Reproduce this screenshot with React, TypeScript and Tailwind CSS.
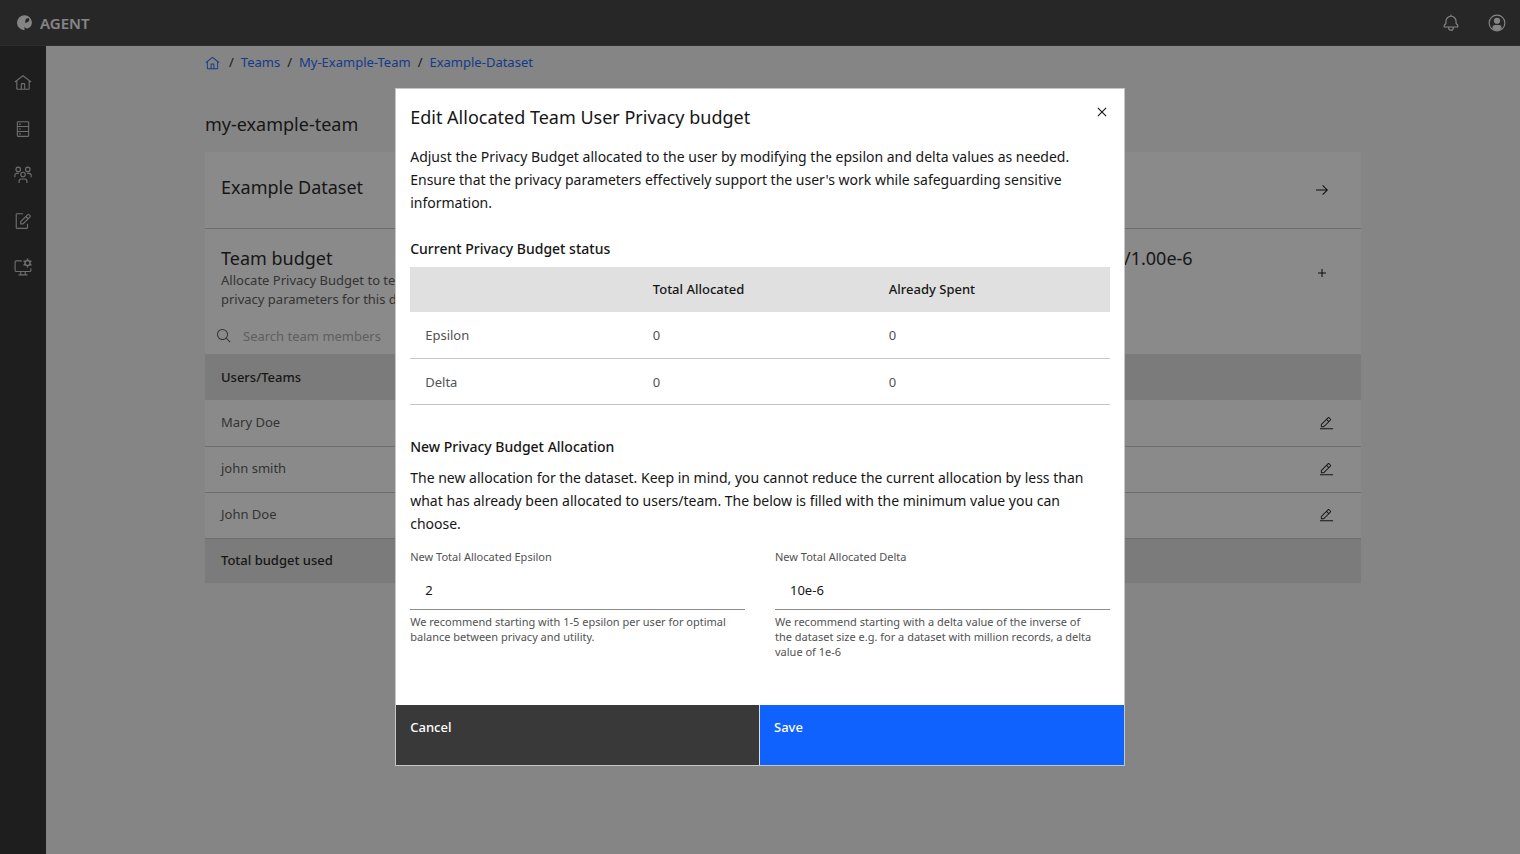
import React, { useState } from 'react';
import { clsx } from 'clsx';

interface IconProps {
  size?: number;
  className?: string;
}

const ICON_PATHS: Record<string, string> = {
  home: 'M16.6123,2.2138a1.01,1.01,0,0,0-1.2427,0L1,13.4194l1.2427,1.5717L4,13.6208V26a2.0041,2.0041,0,0,0,2,2H26a2.0037,2.0037,0,0,0,2-2V13.63L29.7573,15,31,13.4282ZM18,26H14V18h4Zm2,0V18a2.0023,2.0023,0,0,0-2-2H14a2.002,2.002,0,0,0-2,2v8H6V12.0615l10-7.79,10,7.8005V26Z',
  edit: 'M2 26H30V28H2z M25.4,9c0.8-0.8,0.8-2,0-2.8l-3.6-3.6c-0.8-0.8-2-0.8-2.8,0l-15,15V24h6.4L25.4,9z M20.4,4L24,7.6l-3,3L17.4,7L20.4,4z M6,22v-3.6l10-10l3.6,3.6l-10,10H6z',
  search: 'M29,27.5859l-7.5521-7.5521a11.0177,11.0177,0,1,0-1.4141,1.4141L27.5859,29ZM4,13a9,9,0,1,1,9,9A9.01,9.01,0,0,1,4,13Z',
  close: 'M17.4141 16L24 9.4141 22.5859 8 16 14.5859 9.4143 8 8 9.4141 14.5859 16 8 22.5859 9.4143 24 16 17.4141 22.5859 24 24 22.5859 17.4141 16z',
  arrow: 'M18 6L16.57 7.393 24.15 15 4 15 4 17 24.15 17 16.57 24.573 18 26 28 16 18 6z',
  add: 'M17 15V8H15V15H8V17H15V24H17V17H24V15z',
  bell: 'M28.7071,19.293,26,16.5859V13a10.0136,10.0136,0,0,0-9-9.9492V1H15V3.0508A10.0136,10.0136,0,0,0,6,13v3.5859L3.2929,19.293A1,1,0,0,0,3,20v3a1,1,0,0,0,1,1h7v.7768a5.152,5.152,0,0,0,4.5,5.1987A5.0057,5.0057,0,0,0,21,25V24h7a1,1,0,0,0,1-1V20A1,1,0,0,0,28.7071,19.293ZM19,25a3,3,0,0,1-6,0V24h6Zm8-3H5V20.4141L7.707,17.707A1,1,0,0,0,8,17V13a8,8,0,0,1,16,0v4a1,1,0,0,0,.293.707L27,20.4141Z',
};

const Icon: React.FC<IconProps & { name: string }> = ({ name, size = 16, className }) => (
  <svg width={size} height={size} viewBox="0 0 32 32" fill="currentColor" className={className} aria-hidden="true">
    <path fillRule="evenodd" d={ICON_PATHS[name]} />
  </svg>
);

const LineIcon: React.FC<IconProps & { children: React.ReactNode }> = ({ size = 18, className, children }) => (
  <svg
    width={size}
    height={size}
    viewBox="0 0 32 32"
    fill="none"
    stroke="currentColor"
    strokeWidth="2"
    className={className}
    aria-hidden="true"
  >
    {children}
  </svg>
);

const NAV_ITEMS: { label: string; icon: React.ReactNode }[] = [
  { label: 'Home', icon: <Icon name="home" size={18} /> },
  {
    label: 'Datasets',
    icon: (
      <LineIcon>
        <rect x="6" y="3" width="20" height="26" rx="1" />
        <path d="M6 11.5h20M6 20.5h20M9 7.3h3M9 16h3M9 24.7h3" />
      </LineIcon>
    ),
  },
  {
    label: 'Teams',
    icon: (
      <LineIcon>
        <circle cx="7.5" cy="6" r="4" />
        <circle cx="24.5" cy="6" r="4" />
        <circle cx="16" cy="15" r="4" />
        <path d="M1.500 20v-3a4 4 0 0 1 4-4h3M30.500 20v-3a4 4 0 0 0-4-4h-3M9 30v-3a4 4 0 0 1 4-4h6a4 4 0 0 1 4 4v3" />
      </LineIcon>
    ),
  },
  {
    label: 'Requests',
    icon: (
      <LineIcon>
        <path d="M16 3H5a1 1 0 0 0-1 1v24a1 1 0 0 0 1 1h18a1 1 0 0 0 1-1v-7" />
        <path d="M12 21v-4L24.500 4.500a1.400 1.400 0 0 1 2 0l2 2a1.400 1.400 0 0 1 0 2L16 21zM21 8l4 4" />
      </LineIcon>
    ),
  },
  {
    label: 'Settings',
    icon: (
      <LineIcon>
        <path d="M14 5H4a2 2 0 0 0-2 2v15a2 2 0 0 0 2 2h24a2 2 0 0 0 2-2v-4M12 24v6M20 24v6M8 30h16" />
        <circle cx="24" cy="9" r="4.500" strokeWidth="2.500" />
        <path strokeWidth="2.500" d="M24 1v3.500M24 13.500v3.500M17 5l3 2M28 11l3 2M17 13l3-2M28 7l3-2" />
      </LineIcon>
    ),
  },
];

const CRUMBS = ['Teams', 'My-Example-Team', 'Example-Dataset'];
const MEMBERS = ['Mary Doe', 'john smith', 'John Doe'];
const BUDGET_ROWS = [
  { name: 'Epsilon', total: 0, spent: 0 },
  { name: 'Delta', total: 0, spent: 0 },
];

const Header: React.FC = () => (
  <header className="flex h-[46px] shrink-0 items-center justify-between border-b border-[#474747] bg-[#393939] px-4 pt-px text-[#f4f4f4]">
    <a href="#" className="flex items-center gap-2">
      <svg width="16" height="16" viewBox="0 0 16 16" fill="currentColor" aria-hidden="true">
        <path
          fillRule="evenodd"
          d="M8.500 .3A7.700 7.700 0 0 0 1 8A7.500 7.500 0 0 0 8.500 15.200V11.500C9 13.500 11 14 12.800 13C15 11.800 16 9.500 15.900 7.500C15.700 3.500 12.500 .3 8.500 .3ZM9.300 8.300V5.500C9.500 4 10.800 3 12.300 3C13.300 3.500 13.600 4.700 13 5.700C12.200 7.200 10.600 7.500 9.300 8.300Z"
        />
      </svg>
      <span className="text-[15px] font-semibold">AGENT</span>
    </a>
    <div className="flex items-center gap-7">
      <button type="button" aria-label="Notifications">
        <Icon name="bell" size={18} />
      </button>
      <button type="button" aria-label="Account" className="-mr-0.5">
        <svg width="18" height="18" viewBox="0 0 32 32" fill="currentColor" aria-hidden="true">
          <circle cx="16" cy="16" r="14" fill="none" stroke="currentColor" strokeWidth="2" />
          <circle cx="16" cy="12" r="5.500" />
          <path d="M8 26v-2a4.500 4.500 0 0 1 4.500-4.500h7A4.500 4.500 0 0 1 24 24v2a13 13 0 0 1-16 0z" />
        </svg>
      </button>
    </div>
  </header>
);

const Sidebar: React.FC = () => (
  <nav aria-label="Main" className="flex w-[46px] shrink-0 flex-col bg-[#262626] pt-[14px] text-[#c6c6c6]">
    {NAV_ITEMS.map((item) => (
      <a key={item.label} href="#" aria-label={item.label} className="flex h-[46px] items-center justify-center">
        {item.icon}
      </a>
    ))}
  </nav>
);

const DatasetPage: React.FC = () => (
  <main className="min-w-0 flex-1 bg-[#f4f4f4] px-4">
    <div className="mx-auto max-w-[1156px]">
      <nav aria-label="Breadcrumb" className="flex h-[34px] items-center text-[13px] text-[#0f62fe]">
        <a href="#" aria-label="Home" className="pr-0.5">
          <Icon name="home" size={15} />
        </a>
        {CRUMBS.map((crumb) => (
          <React.Fragment key={crumb}>
            <span className="px-[7px] text-[#161616]">/</span>
            <a href="#">{crumb}</a>
          </React.Fragment>
        ))}
      </nav>

      <h1 className="mt-8 text-[18px] leading-6 text-[#161616]">my-example-team</h1>

      <section className="mt-4 bg-white">
        {/* Dataset title */}
        <div className="flex h-[77px] items-center justify-between border-b border-[#c6c6c6] pr-[31px] pl-4">
          <h2 className="pb-[5px] text-[18px] text-[#161616]">Example Dataset</h2>
          <button type="button" aria-label="Open dataset">
            <Icon name="arrow" />
          </button>
        </div>

        {/* Team budget */}
        <div className="flex h-[88px] pr-[31px] pl-4">
          <div className="flex-1 pt-[17px]">
            <h2 className="text-[18px] leading-6 text-[#161616]">Team budget</h2>
            <p className="w-[310px] pt-px text-[13px] leading-[19px] text-[#525252]">
              Allocate Privacy Budget to team members by privacy parameters for this dataset
            </p>
          </div>
          <p className="w-[190px] pt-[17px] text-[18px] leading-6 text-[#161616]">/1.00e-6</p>
          <button type="button" aria-label="Add budget">
            <Icon name="add" />
          </button>
        </div>

        <label className="flex h-[37px] items-center gap-[11px] pl-[11px] text-[#525252]">
          <Icon name="search" />
          <input
            type="search"
            aria-label="Search team members"
            placeholder="Search team members"
            className="flex-1 bg-transparent pt-0.5 text-[13px] outline-none placeholder:text-[#a8a8a8]"
          />
        </label>

        <table className="w-full border-collapse text-left text-[13px]">
          <thead className="bg-[#e0e0e0] text-[#161616]">
            <tr className="h-[46px]">
              <th scope="col" className="pt-0.5 pl-4 font-medium">Users/Teams</th>
              <th scope="col" aria-label="Actions" className="w-[116px]"></th>
            </tr>
          </thead>
          <tbody className="text-[#525252]">
            {MEMBERS.map((member) => (
              <tr key={member} className="h-[46px] border-b border-[#c6c6c6]">
                <td className="pl-4">{member}</td>
                <td className="pr-[27px] text-right text-[#161616]">
                  <button type="button" aria-label={`Edit ${member}`} className="align-middle">
                    <Icon name="edit" size={15} />
                  </button>
                </td>
              </tr>
            ))}
          </tbody>
          <tfoot className="bg-[#e0e0e0] text-[#161616]">
            <tr className="h-[45px]">
              <th scope="row" className="pl-4 font-medium">Total budget used</th>
              <td></td>
            </tr>
          </tfoot>
        </table>
      </section>
    </div>
  </main>
);

interface BudgetFieldProps {
  id: string;
  label: string;
  help: string;
  value: string;
  onChange: (value: string) => void;
}

const BudgetField: React.FC<BudgetFieldProps> = ({ id, label, help, value, onChange }) => (
  <div className="text-[11px] leading-[15px] text-[#525252]">
    <label htmlFor={id} className="block">{label}</label>
    <input
      id={id}
      type="text"
      value={value}
      aria-describedby={`${id}-help`}
      onChange={(e) => onChange(e.target.value)}
      className="mt-2 block h-[38px] w-full border-b border-[#8d8d8d] px-[15px] text-[13px] text-[#161616] outline-none"
    />
    <p id={`${id}-help`} className="mt-1 pr-4">{help}</p>
  </div>
);

const BudgetModal: React.FC<{ onClose: () => void }> = ({ onClose }) => {
  const [epsilon, setEpsilon] = useState('2');
  const [delta, setDelta] = useState('10e-6');

  return (
    <div className="fixed inset-0 flex items-center justify-center bg-[#161616]/50">
      <div
        role="dialog"
        aria-modal="true"
        aria-labelledby="modal-title"
        className="w-[48%] min-w-[600px] border border-[#c6c6c6] bg-white text-[#161616]"
      >
        <div className="flex items-start justify-between pt-[14px] pr-[13px] pl-[14px]">
          <h2 id="modal-title" className="pt-[2px] text-[18px] leading-6">Edit Allocated Team User Privacy budget</h2>
          <button type="button" aria-label="Close" onClick={onClose}>
            <Icon name="close" size={18} />
          </button>
        </div>

        <div className="px-[14px] pt-4 pb-[46px]">
          <p className="text-[14px] leading-[23px]">
            Adjust the Privacy Budget allocated to the user by modifying the epsilon and delta values as needed.
            Ensure that the privacy parameters effectively support the user's work while safeguarding sensitive
            information.
          </p>

          <h3 className="mt-[23px] text-[14px] leading-[23px] font-medium">Current Privacy Budget status</h3>
          <table className="mt-[7px] w-full table-fixed border-collapse text-left text-[13px]">
            <thead className="bg-[#e0e0e0]">
              <tr className="h-[45px]">
                <th scope="col" aria-label="Parameter"></th>
                <th scope="col" className="w-[236px] pl-[15px] font-medium">Total Allocated</th>
                <th scope="col" className="w-[236px] pl-[15px] font-medium">Already Spent</th>
              </tr>
            </thead>
            <tbody className="text-[#525252]">
              {BUDGET_ROWS.map((row) => (
                <tr key={row.name} className="h-[46px] border-b border-[#c6c6c6]">
                  <td className="pt-0.5 pl-[15px]">{row.name}</td>
                  <td className="pt-0.5 pl-[15px]">{row.total}</td>
                  <td className="pt-0.5 pl-[15px]">{row.spent}</td>
                </tr>
              ))}
            </tbody>
          </table>

          <h3 className="mt-[30px] text-[14px] leading-[23px] font-medium">New Privacy Budget Allocation</h3>
          <p className="mt-2 text-[14px] leading-[23px]">
            The new allocation for the dataset. Keep in mind, you cannot reduce the current allocation by less than
            what has already been allocated to users/team. The below is filled with the minimum value you can
            choose.
          </p>

          <div className="mt-[14px] grid grid-cols-2 gap-[30px]">
            <BudgetField
              id="epsilon"
              label="New Total Allocated Epsilon"
              help="We recommend starting with 1-5 epsilon per user for optimal balance between privacy and utility."
              value={epsilon}
              onChange={setEpsilon}
            />
            <BudgetField
              id="delta"
              label="New Total Allocated Delta"
              help="We recommend starting with a delta value of the inverse of the dataset size e.g. for a dataset with million records, a delta value of 1e-6"
              value={delta}
              onChange={setDelta}
            />
          </div>
        </div>

        <div className="grid grid-cols-2 text-[13px] font-medium text-white">
          {['Cancel', 'Save'].map((action) => (
            <button
              key={action}
              type="button"
              onClick={onClose}
              className={clsx(
                'flex h-[60px] items-start px-[14px] pt-[13px] text-left',
                action === 'Save' ? 'bg-[#0f62fe]' : 'border-r border-[#e0e0e0] bg-[#393939]'
              )}
            >
              {action}
            </button>
          ))}
        </div>
      </div>
    </div>
  );
};

const App: React.FC = () => {
  const [open, setOpen] = useState(true);

  return (
    <div className="flex min-h-screen flex-col font-['Noto_Sans',sans-serif]">
      <Header />
      <div className="flex flex-1">
        <Sidebar />
        <DatasetPage />
      </div>
      {open && <BudgetModal onClose={() => setOpen(false)} />}
    </div>
  );
};

export default App;
